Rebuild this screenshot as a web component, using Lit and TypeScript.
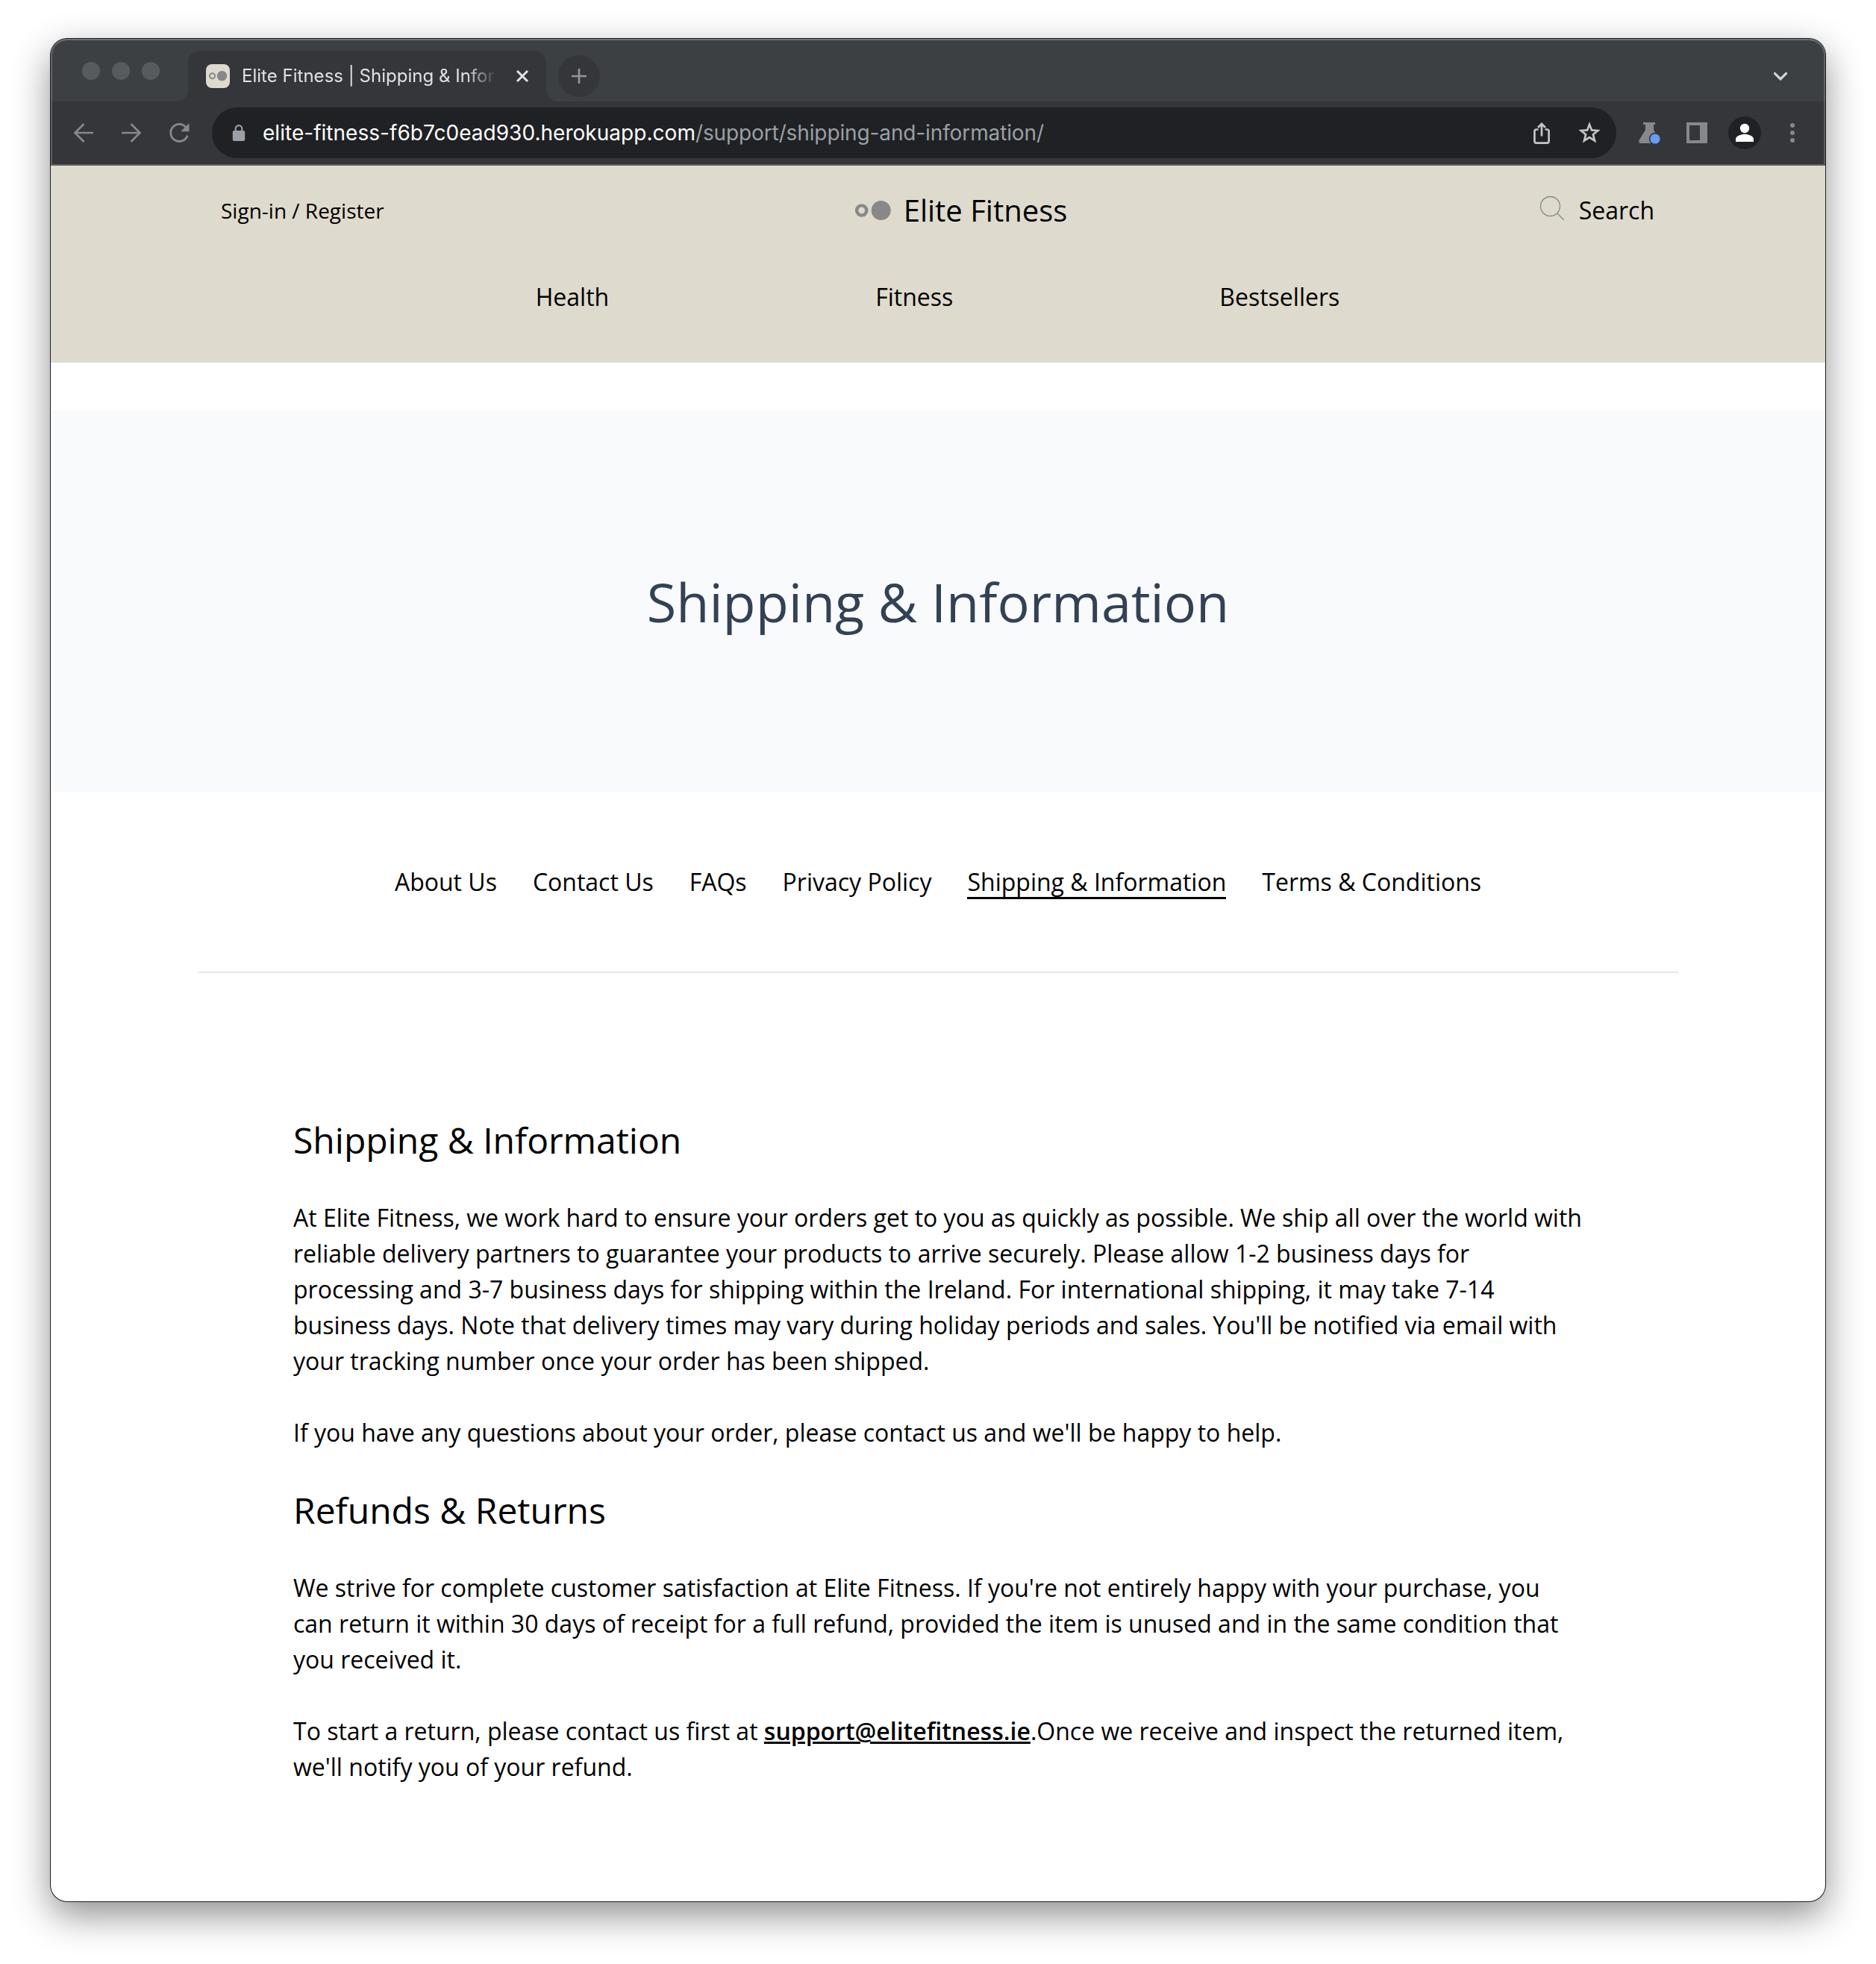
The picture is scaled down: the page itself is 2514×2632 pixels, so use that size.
import { LitElement, html, css } from "lit";
import { customElement } from "lit/decorators.js";
import { classMap } from "lit/directives/class-map.js";

@customElement("browser-chrome")
class BrowserChrome extends LitElement {
  static styles = css`
    :host { display: block; font-family: Inter, "Liberation Sans", sans-serif; }
    svg { display: block; flex: none; overflow: visible; }
    .frame {
      box-sizing: border-box; height: 170px; display: flex; flex-direction: column;
      background: #35363a; border-bottom: 2px solid #5f6063;
      border-radius: 22px 22px 0 0; overflow: hidden; position: relative;
    }
    /* light rim that follows the rounded top of the window */
    .rim {
      position: absolute; inset: 0 0 -2px 0; border-radius: 22px 22px 0 0; pointer-events: none;
      box-sizing: border-box; border: 2px solid rgba(255, 255, 255, 0.2); border-top-color: rgba(255, 255, 255, 0.27); border-bottom: 0;
    }
    .strip {
      height: 84px; box-sizing: border-box; background: #3c4043; display: flex;
      align-items: flex-start; padding-left: 42px; padding-right: 46px;
    }
    .lights { display: flex; gap: 16px; padding-top: 31px; }
    .light { width: 24px; height: 24px; border-radius: 50%; background: #575b5e; }
    .tabwrap { display: flex; align-items: flex-end; margin-left: 22px; padding-top: 16px; }
    .lights, .tabwrap, .plus, .chev { flex: none; }
    .lights { margin-left: 0; }
    .flare { width: 16px; height: 16px; }
    .tab {
      width: 480px; height: 68px; box-sizing: border-box; background: #35363a;
      border-radius: 16px 16px 0 0; display: flex; align-items: center; padding-left: 24px;
    }
    .title {
      margin-left: 16px; width: 342px; overflow: hidden; white-space: nowrap; color: #dfe1e5;
      font-size: 24px; line-height: 32px; letter-spacing: 0.02px;
      -webkit-mask-image: linear-gradient(90deg, #000 88%, transparent 100%);
      mask-image: linear-gradient(90deg, #000 88%, transparent 100%);
    }
    .close { margin-left: 26px; }
    .plus {
      width: 56px; height: 56px; border-radius: 50%; background: #35363a; margin-top: 22px;
      display: flex; align-items: center; justify-content: center;
    }
    .spacer { flex: 1; }
    .chev { padding: 42px 4px 0 0; }
    .bar {
      height: 84px; display: flex; align-items: center; box-sizing: border-box;
      padding: 0 28px;
    }
    .nav { display: flex; flex: none; gap: 32px; }
    .omni {
      margin-left: 28px; width: 1882px; flex: none; height: 68px; box-sizing: border-box; border-radius: 34px;
      background: #202124; display: flex; align-items: center; padding: 0 22px 0 26px;
    }
    .url { margin-left: 22px; font-size: 28px; line-height: 40px; color: #9aa0a6; white-space: nowrap; letter-spacing: -0.12px; }
    .host { color: #fff; letter-spacing: 0.03px; }
    .inner { display: flex; gap: 32px; }
    .outer { display: flex; flex: none; align-items: center; margin-left: 28px; }
    .avatar { margin: 0 26px; }
    .gap { margin-left: 32px; }
  `;

  render() {
    return html`
      <div class="frame">
        <div class="strip">
          <div class="lights">
            <div class="light"></div><div class="light"></div><div class="light"></div>
          </div>
          <div class="tabwrap">
            <svg class="flare" viewBox="0 0 16 16"><path d="M16 0v16H0A16 16 0 0 0 16 0z" fill="#35363a"/></svg>
            <div class="tab">
              <svg width="32" height="32" viewBox="0 0 32 32">
                <rect width="32" height="32" rx="8" fill="#dedacd"/>
                <circle cx="8.5" cy="15.8" r="3.5" fill="none" stroke="#888" stroke-width="2"/>
                <circle cx="21.5" cy="15.8" r="6.7" fill="#888"/>
              </svg>
              <div class="title">Elite Fitness | Shipping &amp; Information</div>
              <svg class="close" width="16" height="16" viewBox="0 0 16 16">
                <path d="M1 1l14 14M15 1L1 15" stroke="#dfe1e5" stroke-width="3"/>
              </svg>
            </div>
            <svg class="flare" viewBox="0 0 16 16"><path d="M0 0v16h16A16 16 0 0 1 0 0z" fill="#35363a"/></svg>
          </div>
          <div class="plus">
            <svg width="20" height="20" viewBox="0 0 20 20"><path d="M10 0v20M0 10h20" stroke="#949698" stroke-width="2.6"/></svg>
          </div>
          <div class="spacer"></div>
          <div class="chev">
            <svg width="20" height="16" viewBox="0 0 20 16"><path d="M2.4 4.4L10 12l7.6-7.6" fill="none" stroke="#d3d5d7" stroke-width="3.2" stroke-linecap="round"/></svg>
          </div>
        </div>
        <div class="bar">
          <div class="nav">
            <svg width="32" height="32" viewBox="0 0 32 32"><path d="M29 16H5M16.500 4L4.500 16l12 12" fill="none" stroke="#87888b" stroke-width="2.700"/></svg>
            <svg width="32" height="32" viewBox="0 0 32 32"><path d="M3 16h24M15.500 4l12 12-12 12" fill="none" stroke="#87888b" stroke-width="2.700"/></svg>
            <svg width="32" height="32" viewBox="0 0 32 32">
              <path d="M25 8.500A11.500 11.500 0 1 0 27.200 19.500" fill="none" stroke="#87888b" stroke-width="2.800"/>
              <path d="M29.500 3v11.300H18.200z" fill="#87888b"/>
            </svg>
          </div>
          <div class="omni">
            <svg width="20" height="24" viewBox="0 0 20 24">
              <rect x="1.800" y="9" width="16.400" height="14" rx="2" fill="#9aa0a6"/>
              <path d="M5.700 10V6.500a4.300 4.300 0 0 1 8.600 0V10" fill="none" stroke="#9aa0a6" stroke-width="2.200"/>
            </svg>
            <div class="url"><span class="host">elite-fitness-f6b7c0ead930.herokuapp.com</span>/support/shipping-and-information/</div>
            <div class="spacer"></div>
            <div class="inner">
              <svg width="36" height="36" viewBox="0 0 36 36">
                <g fill="none" stroke="#c4c5c7" stroke-width="2.700">
                  <path d="M13.500 13.500H11a2.600 2.600 0 0 0-2.600 2.600V29a2.600 2.600 0 0 0 2.600 2.600h14a2.600 2.600 0 0 0 2.600-2.600V16.100A2.600 2.600 0 0 0 25 13.500h-2.500"/>
                  <path d="M18 22.500V6.500M13 11l5-5 5 5"/>
                </g>
              </svg>
              <svg width="28" height="36" viewBox="0 0 28 36">
                <path d="M14 6.800l3 7.600 8.300.6-6.400 5.300 2.100 8.200-7-4.500-7 4.500 2.100-8.200L2.700 15l8.300-.6z" fill="none" stroke="#c4c5c7" stroke-width="2.700"/>
              </svg>
            </div>
          </div>
          <div class="outer">
            <svg width="32" height="32" viewBox="0 0 32 32">
              <path d="M8 2h16v3h-2v7l7 13c1 2.500 0 5-2.500 5H4.500C2.500 30 1.500 27.500 2.800 25.500L11 12V5H8z" fill="#87888b"/>
              <circle cx="24" cy="24" r="8.200" fill="#35363a"/>
              <circle cx="24" cy="24" r="6.600" fill="#669df6"/>
            </svg>
            <svg class="gap" width="32" height="32" viewBox="0 0 32 32">
              <path fill-rule="evenodd" d="M2 2h28v28H2zM6 6v20h14V6z" fill="#87888b"/>
            </svg>
            <svg class="avatar" width="44" height="44" viewBox="0 0 44 44">
              <circle cx="22" cy="22" r="22" fill="#202124"/>
              <circle cx="22" cy="16" r="6.200" fill="#fff"/>
              <path d="M10 34v-4c0-4 8-6.300 12-6.300S34 26 34 30v4z" fill="#fff"/>
            </svg>
            <svg width="32" height="32" viewBox="0 0 32 32" fill="#87888b">
              <circle cx="16" cy="6" r="3"/><circle cx="16" cy="16" r="3"/><circle cx="16" cy="26" r="3"/>
            </svg>
          </div>
        </div>
        <div class="rim"></div>
      </div>
    `;
  }
}

@customElement("support-page")
class SupportPage extends LitElement {
  static styles = css`
    :host { display: block; font-family: "Open Sans", sans-serif; color: #000; font-size: 32px; line-height: 48px; }
    svg { display: block; flex: none; overflow: visible; }
    .header { height: 264px; box-sizing: border-box; background: #dedacd; padding: 32px 229px 0 228px; }
    .top { display: grid; grid-template-columns: 1fr auto 1fr; align-items: center; height: 56px; }
    .signin { font-size: 28px; line-height: 40px; }
    .brand { display: flex; align-items: center; gap: 17px; font-size: 40px; line-height: 56px; padding-left: 61px; }
    .search { display: flex; align-items: center; justify-content: flex-end; gap: 20px; }
    .glass { margin-bottom: 6px; }
    .cats { display: flex; justify-content: center; gap: 357px; padding-top: 64px; }
    .hero {
      margin-top: 64px; height: 512px; background: #f8fafc; color: #334155; display: flex;
      align-items: center; justify-content: center; font-size: 72px; line-height: 80px;
    }
    .links { display: flex; justify-content: center; gap: 48px; padding: 94px 0 97px; margin: 0 197px; border-bottom: 2px solid #e5e7eb; line-height: 52px; }
    .link { box-sizing: border-box; height: 49px; }
    .link.on { box-shadow: inset 0 -3px 0 #000; }
    .content { width: 1728px; margin: 0 auto; padding-top: 192px; }
    h2 { font-weight: 400; font-size: 48px; line-height: 64px; margin: 0 0 48px; }
    p { margin: 0 0 48px; }
    .mail { font-weight: 600; text-decoration: underline; }
  `;

  private links = ["About Us", "Contact Us", "FAQs", "Privacy Policy", "Shipping & Information", "Terms & Conditions"];

  render() {
    return html`
      <div class="header">
        <div class="top">
          <div class="signin">Sign-in / Register</div>
          <div class="brand">
            <svg width="50" height="28" viewBox="0 0 50 28">
              <circle cx="10.700" cy="14" r="6.600" fill="none" stroke="#888" stroke-width="4.400"/>
              <circle cx="36.700" cy="14" r="13" fill="#888"/>
            </svg>
            <span>Elite Fitness</span>
          </div>
          <div class="search">
            <svg class="glass" width="32" height="32" viewBox="0 0 32 32">
              <g fill="none" stroke="#888" stroke-width="1.300"><circle cx="13.500" cy="13.500" r="13"/><path d="M22.700 22.700l9 9"/></g>
            </svg>
            <span>Search</span>
          </div>
        </div>
        <div class="cats"><span>Health</span><span>Fitness</span><span>Bestsellers</span></div>
      </div>
      <div class="hero">Shipping &amp; Information</div>
      <div class="links">
        ${this.links.map((t, i) => html`<div class=${classMap({ link: true, on: i === 4 })}>${t}</div>`)}
      </div>
      <div class="content">
        <h2>Shipping &amp; Information</h2>
        <p>At Elite Fitness, we work hard to ensure your orders get to you as quickly as possible. We ship all over the world with reliable delivery partners to guarantee your products to arrive securely. Please allow 1-2 business days for processing and 3-7 business days for shipping within the Ireland. For international shipping, it may take 7-14 business days. Note that delivery times may vary during holiday periods and sales. You'll be notified via email with your tracking number once your order has been shipped.</p>
        <p>If you have any questions about your order, please contact us and we'll be happy to help.</p>
        <h2>Refunds &amp; Returns</h2>
        <p>We strive for complete customer satisfaction at Elite Fitness. If you're not entirely happy with your purchase, you can return it within 30 days of receipt for a full refund, provided the item is unused and in the same condition that you received it.</p>
        <p>To start a return, please contact us first at <span class="mail">support@elitefitness.ie</span>.Once we receive and inspect the returned item, we'll notify you of your refund.</p>
      </div>
    `;
  }
}

@customElement("app-root")
class AppRoot extends LitElement {
  static styles = css`
    :host { display: block; width: 2514px; height: 2632px; box-sizing: border-box; padding: 52px 68px 0; background: #fff; overflow: hidden; }
    .window {
      width: 2378px; height: 2496px; border-radius: 22px; background: #fff;
      box-shadow: 0 0 0 1px #1c1d1f, 0 18px 50px rgba(0, 0, 0, 0.45);
    }
  `;
  render() {
    return html`<div class="window"><browser-chrome></browser-chrome><support-page></support-page></div>`;
  }
}
